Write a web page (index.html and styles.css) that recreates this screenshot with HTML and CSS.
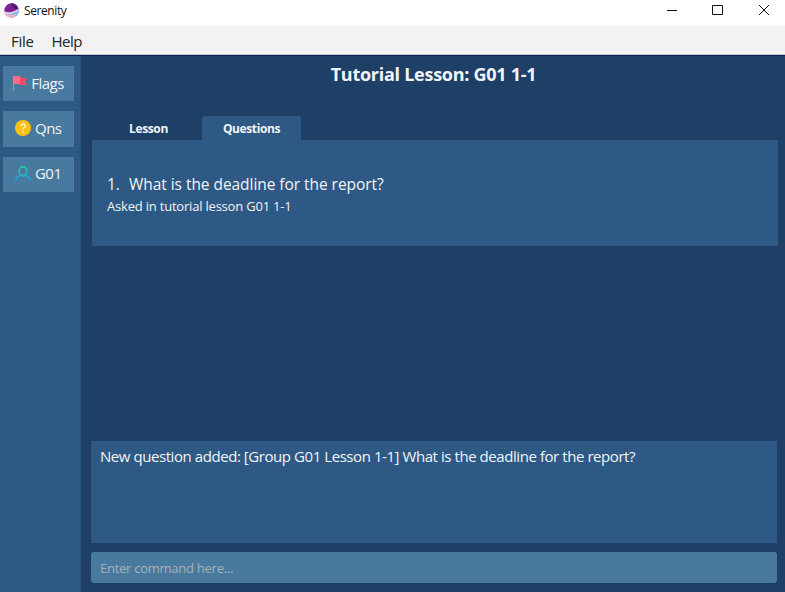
FILE: index.html
```
<!DOCTYPE html>
<html lang="en">
<head>
<meta charset="utf-8">
<title>Serenity</title>
<link rel="stylesheet" href="styles.css">
</head>
<body>
<div class="window">
  <header class="titlebar">
    <svg class="logo" width="15" height="15" viewBox="0 0 15 15">
      <defs><clipPath id="disc"><circle cx="7.5" cy="7.5" r="7.2"/></clipPath></defs>
      <g clip-path="url(#disc)">
        <rect width="15" height="15" fill="#7a2391"/>
        <path d="M7 0H15V6C12 8 10 7 7 0Z" fill="#571475"/>
        <path d="M0 8C5 10.500 9 9.500 15 5V15H0Z" fill="#ecd0ef"/>
        <path d="M0 10C5 12 10 10.500 15 7V15H0Z" fill="#78bde5"/>
        <path d="M0 10C4 12 8 12 12 11L10 15H3Z" fill="#efb5cc"/>
      </g>
    </svg>
    <span class="app-name">Serenity</span>
    <svg class="controls" width="104" height="12" viewBox="0 0 104 12" fill="none" stroke="#111" stroke-width="1">
      <path d="M0 5.500H10M45.500 .5H55.500V9.500H45.500ZM92 0L102 10M102 0L92 10"/>
    </svg>
  </header>
  <nav class="menubar"><span class="file">File</span><span class="help">Help</span></nav>
  <div class="body">
    <aside class="sidebar">
      <button class="side-btn flags">
        <svg width="16" height="18" viewBox="0 0 16 18"><path d="M1.500 2V17" stroke="#8d9bae" stroke-width="1.200"/><path d="M2 2H8.500V10H2Z" fill="#ff6b82"/><path d="M8 4H15L13 7.500L15 11H8Z" fill="#fa4a66"/></svg>
        <span>Flags</span>
      </button>
      <button class="side-btn">
        <svg width="16" height="18" viewBox="0 0 16 18"><circle cx="8" cy="9" r="8" fill="#ffc010"/><path d="M5.900 7.200C5.900 4.200 10.200 4.200 10.200 6.900C10.200 8.700 8 8.600 8 10.700" fill="none" stroke="#fff2c8" stroke-width="1.500"/><circle cx="8" cy="13" r=".9" fill="#fff2c8"/></svg>
        <span>Qns</span>
      </button>
      <button class="side-btn">
        <svg width="16" height="18" viewBox="0 0 16 18" fill="none" stroke-width="1.300"><defs><linearGradient id="person" x1="0" y1="2" x2="0" y2="16" gradientUnits="userSpaceOnUse"><stop stop-color="#20dfa0"/><stop offset="1" stop-color="#199ee0"/></linearGradient></defs><g stroke="url(#person)"><circle cx="8" cy="6" r="4"/><path d="M.9 16.500C.9 13 3 11 5.500 10.500C7.200 11.300 8.800 11.300 10.500 10.500C13 11 15.100 13 15.100 16.500"/></g></svg>
        <span>G01</span>
      </button>
    </aside>
    <main class="content">
      <h1><span>Tutorial Lesson: G01 1-1</span></h1>
      <div class="tabs"><div class="tab lesson"><span>Lesson</span></div><div class="tab active"><span>Questions</span></div></div>
      <section class="questions">
        <div class="question"><span class="num">1.</span><span class="q-text">What is the deadline for the report?</span></div>
        <div class="asked"><span>Asked in tutorial lesson G01 1-1</span></div>
      </section>
      <section class="result"><span>New question added: [Group G01 Lesson 1-1] What is the deadline for the report?</span></section>
      <div class="command"><span>Enter command here...</span></div>
    </main>
  </div>
</div>
</body>
</html>
```
FILE: styles.css
```
* { box-sizing: border-box; }
body { margin: 0; font-family: "Open Sans", "Noto Sans", sans-serif; color: #f1f4f8; }
.window { width: 785px; height: 592px; display: flex; flex-direction: column; background: #fff; overflow: hidden; white-space: nowrap; }
.titlebar { height: 26px; display: flex; align-items: flex-start; padding: 3px 14px 0 4px; color: #111; }
.app-name { margin-left: 5px; font-size: 12px; line-height: 16px; letter-spacing: -0.4px; }
.controls { margin: 2px 0 0 auto; }
.menubar { height: 29px; background: #f2f2f2; border-bottom: 1px solid #c4c6ca; display: flex; padding-left: 11px; font-size: 15px; line-height: 30px; color: #222; }
.file { width: 40.500px; letter-spacing: -0.3px; }
.help { letter-spacing: -0.5px; }
.body { flex: 1; display: flex; border-top: 1px solid #0b1f58; background: #1e3f66; }
.sidebar { width: 81px; background: #2e5984; padding: 10px 6px 0 3px; display: flex; flex-direction: column; gap: 10px; border-right: 1px solid #27507a; }
.side-btn { height: 35.300px; width: 71px; border: 0; padding: 0 0 2px; background: #487a9f; display: flex; align-items: center; justify-content: center; gap: 3.500px; font: 15px "Open Sans", sans-serif; letter-spacing: -0.5px; color: #f1f4f8; }
.side-btn svg { margin-top: 1px; }
.flags { gap: 3px; padding-right: 1px; }
.content { flex: 1; padding: 0 8px 9px 10px; display: flex; flex-direction: column; }
h1 { margin: 0; height: 60px; font-size: 18px; line-height: 36px; font-weight: 700; text-align: center; letter-spacing: -0.27px; padding-right: 1px; }
.tabs { display: flex; height: 24px; font-size: 12px; line-height: 26px; font-weight: 700; letter-spacing: -0.38px; margin-left: 1px; }
.tab { width: 99px; text-align: center; }
.lesson { width: 110px; padding-left: 3px; }
.active { background: #2e5984; border-radius: 3px 3px 0 0; }
.questions { height: 106px; margin: 0 -1px 0 1px; background: #2e5984; padding: 33px 16px 0 15px; }
.question { display: flex; font-size: 15.500px; line-height: 22px; letter-spacing: -0.05px; }
.num { width: 22px; }
.asked { font-size: 13px; line-height: 22px; letter-spacing: -0.2px; }
.result { margin-top: 195px; height: 102px; background: #2e5984; padding: 4px 9px; font-size: 15px; line-height: 22px; letter-spacing: -0.435px; }
.command { margin-top: 9px; height: 31px; border-radius: 3px; background: #487a9f; padding-left: 9px; color: #a9b0b5; font-size: 13px; line-height: 32px; letter-spacing: -0.26px; }
```
